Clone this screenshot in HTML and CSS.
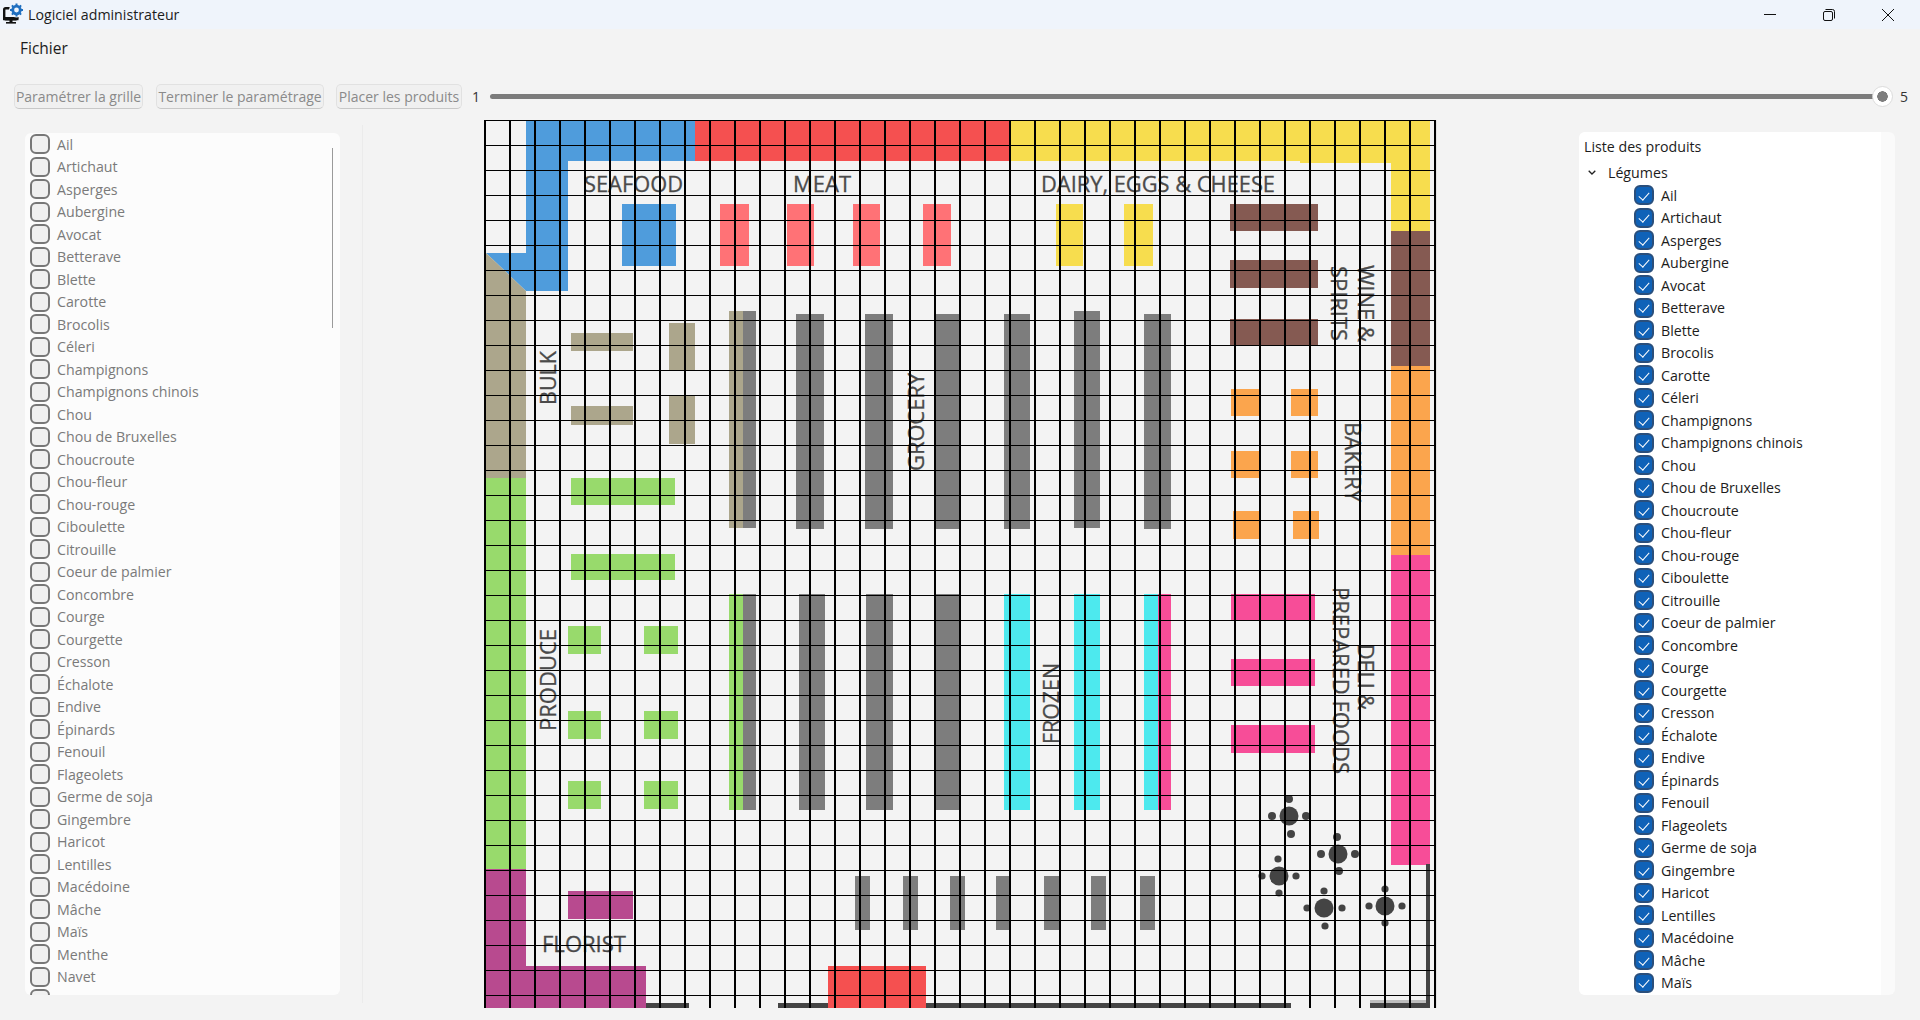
FILE: index.html
```html
<!DOCTYPE html>
<html lang="fr">
  <head>
    <meta charset="UTF-8" />
    <title>Logiciel administrateur</title>
    <link rel="stylesheet" href="styles.css">
  </head>
  <body>
    <header class="titlebar">
      <svg class="app-icon" width="24" height="29" viewBox="0 0 24 29">
        <rect x="4.2" y="8.2" width="13" height="11" rx="1.5" fill="none" stroke="#111" stroke-width="2.4" />
        <rect x="3" y="17" width="15.5" height="3.2" fill="#111" />
        <rect x="9.5" y="20" width="3" height="2" fill="#111" />
        <rect x="6" y="22" width="10" height="1.6" fill="#111" />
        <circle cx="16.5" cy="10" r="7.5" fill="#eff4fb" />
        <circle cx="16.5" cy="10" r="3.8" fill="none" stroke="#1f6fc0" stroke-width="2.8" />
        <path d="M16.5 3.5v2.6M16.5 13.9v2.6M10 10h2.6M20.4 10H23M11.9 5.4l1.8 1.8M19.3 12.8l1.8 1.8M11.9 14.6l1.8-1.8M19.3 7.2l1.8-1.8" stroke="#1f6fc0" stroke-width="2" />
      </svg>
      <span class="app-title">Logiciel administrateur</span>
      <div class="win-controls">
        <svg class="win-btn" width="12" height="12" viewBox="0 0 12 12"><path d="M0 5.5h12" stroke="#111" stroke-width="1" /></svg>
        <svg class="win-btn" width="12" height="12" viewBox="0 0 12 12"><rect x="0.5" y="2.5" width="9" height="9" rx="1.5" fill="none" stroke="#111" /><path d="M2.5 .5h7a2 2 0 0 1 2 2v7" fill="none" stroke="#111" /></svg>
        <svg class="win-btn" width="12" height="12" viewBox="0 0 12 12"><path d="M0 0l12 12M12 0L0 12" stroke="#111" stroke-width="1" /></svg>
      </div>
    </header>

    <nav class="menubar">Fichier</nav>

    <div class="toolbar">
      <button class="tool-btn btn-a" disabled>Paramétrer la grille</button>
      <button class="tool-btn btn-b" disabled>Terminer le paramétrage</button>
      <button class="tool-btn btn-c" disabled>Placer les produits</button>
      <span class="tick tick-min">1</span>
      <div class="slider"><span class="slider-handle"></span></div>
      <span class="tick tick-max">5</span>
    </div>

    <main class="content">
      <div class="left-col">
        <section class="panel-left">
          <span class="scroll-line scroll-left"></span>
          <label class="row"><input type="checkbox" />Ail</label>
          <label class="row"><input type="checkbox" />Artichaut</label>
          <label class="row"><input type="checkbox" />Asperges</label>
          <label class="row"><input type="checkbox" />Aubergine</label>
          <label class="row"><input type="checkbox" />Avocat</label>
          <label class="row"><input type="checkbox" />Betterave</label>
          <label class="row"><input type="checkbox" />Blette</label>
          <label class="row"><input type="checkbox" />Carotte</label>
          <label class="row"><input type="checkbox" />Brocolis</label>
          <label class="row"><input type="checkbox" />Céleri</label>
          <label class="row"><input type="checkbox" />Champignons</label>
          <label class="row"><input type="checkbox" />Champignons chinois</label>
          <label class="row"><input type="checkbox" />Chou</label>
          <label class="row"><input type="checkbox" />Chou de Bruxelles</label>
          <label class="row"><input type="checkbox" />Choucroute</label>
          <label class="row"><input type="checkbox" />Chou-fleur</label>
          <label class="row"><input type="checkbox" />Chou-rouge</label>
          <label class="row"><input type="checkbox" />Ciboulette</label>
          <label class="row"><input type="checkbox" />Citrouille</label>
          <label class="row"><input type="checkbox" />Coeur de palmier</label>
          <label class="row"><input type="checkbox" />Concombre</label>
          <label class="row"><input type="checkbox" />Courge</label>
          <label class="row"><input type="checkbox" />Courgette</label>
          <label class="row"><input type="checkbox" />Cresson</label>
          <label class="row"><input type="checkbox" />Échalote</label>
          <label class="row"><input type="checkbox" />Endive</label>
          <label class="row"><input type="checkbox" />Épinards</label>
          <label class="row"><input type="checkbox" />Fenouil</label>
          <label class="row"><input type="checkbox" />Flageolets</label>
          <label class="row"><input type="checkbox" />Germe de soja</label>
          <label class="row"><input type="checkbox" />Gingembre</label>
          <label class="row"><input type="checkbox" />Haricot</label>
          <label class="row"><input type="checkbox" />Lentilles</label>
          <label class="row"><input type="checkbox" />Macédoine</label>
          <label class="row"><input type="checkbox" />Mâche</label>
          <label class="row"><input type="checkbox" />Maïs</label>
          <label class="row"><input type="checkbox" />Menthe</label>
          <label class="row"><input type="checkbox" />Navet</label>
          <label class="row"><input type="checkbox" />Oignon</label>
        </section>
      </div>

      <svg class="map" width="953" height="888" viewBox="484 120 953 888">
        <defs>
          <pattern id="cell" patternUnits="userSpaceOnUse" x="484" y="120" width="25" height="25">
            <rect width="2" height="25" fill="#000" />
            <rect width="25" height="1" fill="#000" />
          </pattern>
        </defs>

        <!-- walls -->
        <path class="blue" d="M526 120H695V161H568V291H526L486 253H526Z" />
        <rect class="red" x="695" y="120" width="314" height="41" />
        <path class="yellow" d="M1009 120H1430V231H1391V163H1300V161H1009Z" />
        <path class="tan" d="M486 253L526 291V478H486Z" />
        <rect class="green" x="486" y="478" width="40" height="391" />
        <path class="purple" d="M486 869H526V966H646V1008H486Z" />
        <rect class="brown" x="1391" y="231" width="39" height="135" />
        <rect class="orange" x="1391" y="366" width="39" height="189" />
        <rect class="pink" x="1391" y="555" width="39" height="310" />
        <rect class="edge" x="1436" y="120" width="1" height="888" />

        <!-- seafood, meat, dairy -->
        <rect class="blue" x="622" y="204" width="54" height="62" />
        <rect class="salmon" x="720" y="204" width="29" height="62" />
        <rect class="salmon" x="787" y="204" width="27" height="62" />
        <rect class="salmon" x="853" y="204" width="27" height="62" />
        <rect class="salmon" x="923" y="204" width="28" height="62" />
        <rect class="yellow" x="1056" y="204" width="27" height="62" />
        <rect class="yellow" x="1124" y="204" width="29" height="62" />

        <!-- bulk -->
        <rect class="tan" x="571" y="333" width="62" height="18" />
        <rect class="tan" x="571" y="406" width="62" height="19" />
        <rect class="tan" x="669" y="323" width="26" height="47" />
        <rect class="tan" x="669" y="395" width="26" height="49" />

        <!-- aisles -->
        <rect class="tan" x="729" y="311" width="14" height="217" />
        <rect class="grey" x="743" y="311" width="13" height="217" />
        <rect class="grey" x="796" y="314" width="28" height="215" />
        <rect class="grey" x="865" y="314" width="28" height="215" />
        <rect class="grey" x="935" y="314" width="25" height="215" />
        <rect class="grey" x="1004" y="314" width="26" height="215" />
        <rect class="grey" x="1074" y="311" width="26" height="217" />
        <rect class="grey" x="1144" y="314" width="27" height="215" />
        <rect class="green" x="729" y="594" width="14" height="216" />
        <rect class="grey" x="743" y="594" width="13" height="216" />
        <rect class="grey" x="799" y="594" width="26" height="216" />
        <rect class="grey" x="866" y="594" width="27" height="216" />
        <rect class="grey" x="935" y="594" width="26" height="216" />
        <rect class="cyan" x="1004" y="594" width="26" height="216" />
        <rect class="cyan" x="1074" y="594" width="26" height="216" />
        <rect class="cyan" x="1144" y="594" width="14" height="216" />
        <rect class="pink" x="1158" y="594" width="13" height="216" />

        <!-- produce -->
        <rect class="green" x="571" y="478" width="104" height="27" />
        <rect class="green" x="571" y="554" width="104" height="26" />
        <rect class="green" x="568" y="626" width="33" height="28" />
        <rect class="green" x="644" y="626" width="34" height="28" />
        <rect class="green" x="568" y="711" width="33" height="28" />
        <rect class="green" x="644" y="711" width="34" height="28" />
        <rect class="green" x="568" y="781" width="33" height="28" />
        <rect class="green" x="644" y="781" width="34" height="28" />
        <rect class="purple" x="568" y="891" width="65" height="28" />

        <!-- wine, bakery, deli -->
        <rect class="brown" x="1230" y="204" width="88" height="27" />
        <rect class="brown" x="1230" y="260" width="88" height="28" />
        <rect class="brown" x="1230" y="319" width="88" height="27" />
        <rect class="orange" x="1231" y="389" width="28" height="27" />
        <rect class="orange" x="1291" y="389" width="27" height="27" />
        <rect class="orange" x="1231" y="451" width="28" height="27" />
        <rect class="orange" x="1291" y="451" width="27" height="27" />
        <rect class="orange" x="1233" y="511" width="26" height="28" />
        <rect class="orange" x="1293" y="511" width="26" height="28" />
        <rect class="pink" x="1231" y="594" width="84" height="26" />
        <rect class="pink" x="1231" y="659" width="84" height="27" />
        <rect class="pink" x="1231" y="725" width="84" height="28" />

        <!-- checkouts -->
        <rect class="grey" x="855" y="876" width="15" height="54" />
        <rect class="grey" x="903" y="876" width="15" height="54" />
        <rect class="grey" x="950" y="876" width="15" height="54" />
        <rect class="grey" x="996" y="876" width="14" height="54" />
        <rect class="grey" x="1044" y="876" width="15" height="54" />
        <rect class="grey" x="1091" y="876" width="15" height="54" />
        <rect class="grey" x="1140" y="876" width="15" height="54" />

        <!-- front wall -->
        <rect class="dark" x="646" y="1003" width="43" height="5" />
        <rect class="dark" x="778" y="1003" width="50" height="5" />
        <rect class="red" x="828" y="966" width="98" height="42" />
        <rect class="dark" x="926" y="1003" width="365" height="5" />
        <rect class="dark" x="1370" y="1003" width="60" height="5" />
        <rect class="wall-soft" x="1370" y="1000" width="56" height="3" />
        <rect class="dark" x="1426" y="864" width="4" height="144" />

        <!-- cafe tables -->
        <g class="dark">
          <circle cx="1289" cy="816" r="9.5" /><circle cx="1289" cy="799" r="4" /><circle cx="1272" cy="816" r="4" /><circle cx="1306" cy="816" r="4" /><circle cx="1291" cy="834" r="4" />
          <circle cx="1338" cy="854" r="9.5" /><circle cx="1337" cy="837" r="4" /><circle cx="1321" cy="854" r="4" /><circle cx="1355" cy="854" r="4" /><circle cx="1339" cy="871" r="4" />
          <circle cx="1279" cy="876" r="9.5" /><circle cx="1278" cy="859" r="3.6" /><circle cx="1262" cy="876" r="3.6" /><circle cx="1296" cy="876" r="3.6" /><circle cx="1279" cy="893" r="3.6" />
          <circle cx="1324" cy="908" r="9.5" /><circle cx="1324" cy="891" r="3.6" /><circle cx="1307" cy="908" r="3.6" /><circle cx="1342" cy="908" r="3.6" /><circle cx="1325" cy="926" r="3.6" />
          <circle cx="1385" cy="906" r="9.5" /><circle cx="1385" cy="889" r="3.6" /><circle cx="1369" cy="906" r="3.6" /><circle cx="1402" cy="906" r="3.6" /><circle cx="1385" cy="923" r="3.6" />
        </g>

        <!-- labels -->
        <text class="label" x="584" y="192" textLength="99" lengthAdjust="spacingAndGlyphs">SEAFOOD</text>
        <text class="label" x="793" y="192" textLength="58" lengthAdjust="spacingAndGlyphs">MEAT</text>
        <text class="label" x="1041" y="192" textLength="234" lengthAdjust="spacingAndGlyphs">DAIRY, EGGS &amp; CHEESE</text>
        <text class="label" x="542" y="952" textLength="84" lengthAdjust="spacingAndGlyphs">FLORIST</text>
        <text class="label" transform="translate(556 405) rotate(-90)" textLength="54" lengthAdjust="spacingAndGlyphs">BULK</text>
        <text class="label" transform="translate(556 731) rotate(-90)" textLength="102" lengthAdjust="spacingAndGlyphs">PRODUCE</text>
        <text class="label" transform="translate(924 471) rotate(-90)" textLength="98" lengthAdjust="spacingAndGlyphs">GROCERY</text>
        <text class="label" transform="translate(1059 744) rotate(-90)" textLength="81" lengthAdjust="spacingAndGlyphs">FROZEN</text>
        <text class="label" transform="translate(1358 265) rotate(90)" textLength="77" lengthAdjust="spacingAndGlyphs">WINE &amp;</text>
        <text class="label" transform="translate(1331 266) rotate(90)" textLength="75" lengthAdjust="spacingAndGlyphs">SPIRITS</text>
        <text class="label" transform="translate(1345 422) rotate(90)" textLength="80" lengthAdjust="spacingAndGlyphs">BAKERY</text>
        <text class="label" transform="translate(1333 587) rotate(90)" textLength="187" lengthAdjust="spacingAndGlyphs">PREPARED FOODS</text>
        <text class="label" transform="translate(1358 644) rotate(90)" textLength="66" lengthAdjust="spacingAndGlyphs">DELI &amp;</text>

        <rect x="484" y="120" width="952" height="888" fill="url(#cell)" />
      </svg>

      <section class="panel-right">
        <div class="tree">
          <span class="scroll-line scroll-right"></span>
          <div class="tree-head">Liste des produits</div>
          <div class="tree-group">
            <svg class="chevron" width="8" height="5" viewBox="0 0 8 5"><path d="M.7 .7L4 4l3.3-3.3" fill="none" stroke="#222" stroke-width="1.3" /></svg>
            Légumes
          </div>
          <div class="tree-items">
            <label class="row"><input type="checkbox" checked />Ail</label>
            <label class="row"><input type="checkbox" checked />Artichaut</label>
            <label class="row"><input type="checkbox" checked />Asperges</label>
            <label class="row"><input type="checkbox" checked />Aubergine</label>
            <label class="row"><input type="checkbox" checked />Avocat</label>
            <label class="row"><input type="checkbox" checked />Betterave</label>
            <label class="row"><input type="checkbox" checked />Blette</label>
            <label class="row"><input type="checkbox" checked />Brocolis</label>
            <label class="row"><input type="checkbox" checked />Carotte</label>
            <label class="row"><input type="checkbox" checked />Céleri</label>
            <label class="row"><input type="checkbox" checked />Champignons</label>
            <label class="row"><input type="checkbox" checked />Champignons chinois</label>
            <label class="row"><input type="checkbox" checked />Chou</label>
            <label class="row"><input type="checkbox" checked />Chou de Bruxelles</label>
            <label class="row"><input type="checkbox" checked />Choucroute</label>
            <label class="row"><input type="checkbox" checked />Chou-fleur</label>
            <label class="row"><input type="checkbox" checked />Chou-rouge</label>
            <label class="row"><input type="checkbox" checked />Ciboulette</label>
            <label class="row"><input type="checkbox" checked />Citrouille</label>
            <label class="row"><input type="checkbox" checked />Coeur de palmier</label>
            <label class="row"><input type="checkbox" checked />Concombre</label>
            <label class="row"><input type="checkbox" checked />Courge</label>
            <label class="row"><input type="checkbox" checked />Courgette</label>
            <label class="row"><input type="checkbox" checked />Cresson</label>
            <label class="row"><input type="checkbox" checked />Échalote</label>
            <label class="row"><input type="checkbox" checked />Endive</label>
            <label class="row"><input type="checkbox" checked />Épinards</label>
            <label class="row"><input type="checkbox" checked />Fenouil</label>
            <label class="row"><input type="checkbox" checked />Flageolets</label>
            <label class="row"><input type="checkbox" checked />Germe de soja</label>
            <label class="row"><input type="checkbox" checked />Gingembre</label>
            <label class="row"><input type="checkbox" checked />Haricot</label>
            <label class="row"><input type="checkbox" checked />Lentilles</label>
            <label class="row"><input type="checkbox" checked />Macédoine</label>
            <label class="row"><input type="checkbox" checked />Mâche</label>
            <label class="row"><input type="checkbox" checked />Maïs</label>
            <label class="row"><input type="checkbox" checked /></label>
          </div>
        </div>
      </section>
    </main>
  </body>
</html>
```

FILE: styles.css
```css
* {
  box-sizing: border-box;
}
html,
body {
  height: 100%;
}
body {
  margin: 0;
  background: #f3f3f3;
  font-family: "Open Sans", "Noto Sans", sans-serif;
  font-size: 14.2px;
  color: #1c1c1c;
  overflow: hidden;
}

/* title bar */
.titlebar {
  display: flex;
  align-items: center;
  height: 29px;
  background: #eff4fb;
}
.app-icon {
  display: block;
}
.app-title {
  margin-left: 4px;
}
.win-controls {
  display: flex;
  gap: 47px;
  margin-left: auto;
  margin-right: 26px;
}
.win-btn {
  display: block;
}

.menubar {
  height: 55px;
  padding: 10px 0 0 20px;
  font-size: 15.5px;
  line-height: 19px;
}

/* toolbar */
.toolbar {
  display: flex;
  align-items: center;
  height: 25px;
  padding: 0 12px 0 14px;
  margin-bottom: 11px;
}
.tool-btn {
  height: 25px;
  padding: 0;
  border: 1px solid #e1e1e1;
  border-bottom-color: #c8c8c8;
  border-radius: 5px;
  background: #f0f0f0;
  font: inherit;
  font-size: 14px;
  color: #8a8a8a;
}
.btn-a {
  width: 129px;
}
.btn-b {
  width: 168px;
  margin-left: 13px;
}
.btn-c {
  width: 126px;
  margin-left: 12px;
}
.tick {
  font-size: 14px;
  color: #333;
}
.tick-min {
  margin-left: 10px;
}
.tick-max {
  margin-left: 8px;
}
.slider {
  position: relative;
  flex: 1;
  height: 5px;
  margin-left: 10px;
  border-radius: 3px;
  background: #7b7b7b;
  margin-top: -1px;
}
.slider-handle {
  position: absolute;
  right: -1px;
  top: -8px;
  width: 21px;
  height: 21px;
  border: 1px solid #dcdcdc;
  border-radius: 50%;
  background: radial-gradient(circle, #7e7e7e 0 5px, #fff 5.5px);
}

/* panels */
.content {
  display: flex;
  height: 888px;
  padding-left: 25px;
}
.left-col {
  width: 338px;
  margin: 5px 0;
  padding-top: 8px;
  border-right: 1px solid #ebebeb;
}
.panel-left {
  position: relative;
  width: 315px;
  height: 862px;
  padding-left: 5px;
  border-radius: 6px;
  background: #fcfcfc;
  color: #7a7a7a;
  overflow: hidden;
}
.map {
  display: block;
  flex: none;
  margin-left: 121px;
}
.panel-right {
  flex: none;
  width: 316px;
  height: 863px;
  margin: 12px 0 0 142px;
  border-radius: 6px;
  background: #fafafa;
  overflow: hidden;
}
.tree {
  position: relative;
  width: 302px;
  height: 863px;
  background: #fff;
  overflow: hidden;
}
.tree-head {
  height: 30px;
  padding-left: 5px;
  line-height: 30px;
}
.tree-group {
  display: flex;
  align-items: center;
  height: 21.75px;
  padding-left: 9px;
}
.chevron {
  margin-right: 12px;
}
.tree-items {
  padding-left: 55px;
}

.scroll-line {
  position: absolute;
  width: 1px;
  background: #9a9a9a;
}
.scroll-left {
  top: 15px;
  left: 307px;
  height: 180px;
}
.scroll-right {
  top: 15px;
  left: 309px;
  height: 393px;
}

/* checkbox rows */
.row {
  display: flex;
  align-items: center;
  gap: 7px;
  height: 22.5px;
  white-space: nowrap;
}
.row input {
  appearance: none;
  position: relative;
  flex: none;
  width: 20px;
  height: 20px;
  margin: 0;
  border: 2px solid #777;
  border-radius: 6px;
  background: #f0f0f0;
}
.row input:checked {
  border-color: #2a4f7c;
  background: #0f62b8;
}
.row input:checked::after {
  content: "";
  position: absolute;
  left: 4.5px;
  top: 2.5px;
  width: 5px;
  height: 9px;
  border: solid #fff;
  border-width: 0 1px 1px 0;
  transform: rotate(42deg);
}

/* map colours */
.blue { fill: #4f9cdc; }
.red { fill: #f55050; }
.yellow { fill: #f7dd4e; }
.tan { fill: #aca68c; }
.green { fill: #98da6c; }
.purple { fill: #b84a8f; }
.brown { fill: #855a52; }
.orange { fill: #fba54d; }
.pink { fill: #f74d98; }
.cyan { fill: #4de9ee; }
.salmon { fill: #ff7276; }
.grey { fill: #7d7d7d; }
.dark { fill: #444; }
.wall-soft { fill: #bdbdbd; }
.edge { fill: #e4e4e4; }
.label {
  font-family: "Open Sans", sans-serif;
  font-size: 22px;
  fill: #4a4a4a;
  stroke: #4a4a4a;
  stroke-width: 0.3;
}
```
